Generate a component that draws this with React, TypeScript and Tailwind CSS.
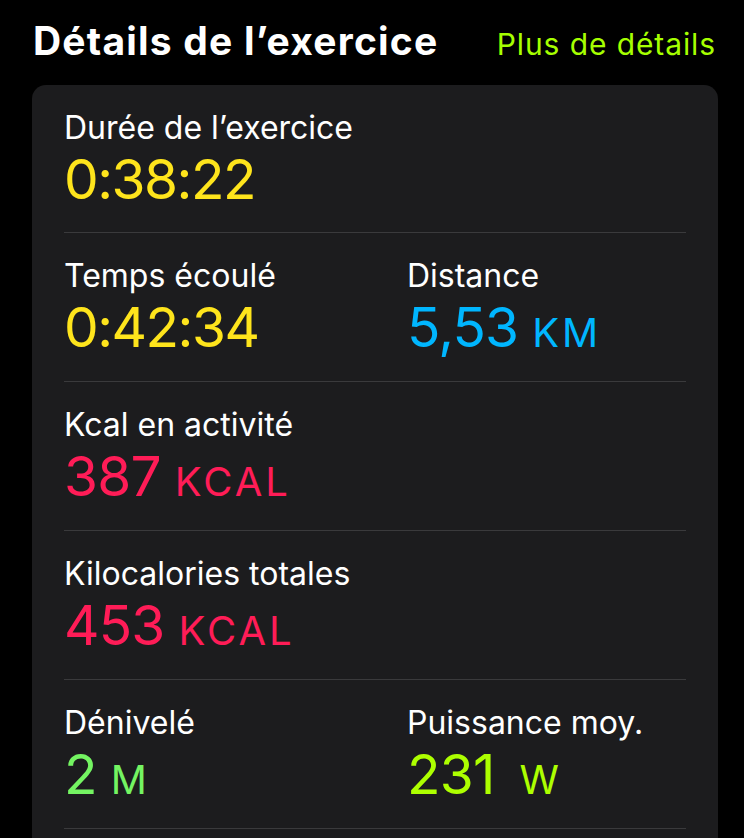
import type { ReactNode } from "react";

type Metric = {
  label: string;
  value: string;
  unit?: string;
  color: string;
};

const rows: Metric[][] = [
  [{ label: "Durée de l’exercice", value: "0:38:22", color: "text-[#fee41c]" }],
  [
    { label: "Temps écoulé", value: "0:42:34", color: "text-[#fee41c]" },
    { label: "Distance", value: "5,53", unit: "KM", color: "text-[#00b6ff]" }
  ],
  [{ label: "Kcal en activité", value: "387", unit: "KCAL", color: "text-[#ff1c57]" }],
  [{ label: "Kilocalories totales", value: "453", unit: "KCAL", color: "text-[#ff1c57]" }],
  [
    { label: "Dénivelé", value: "2", unit: "M", color: "text-[#74f462]" },
    { label: "Puissance moy.", value: "231", unit: "W", color: "text-[#adff00]" }
  ]
];

function MetricCell({ metric }: { metric: Metric }) {
  // times have narrow colons in the original, so they get tighter tracking
  const isTime = metric.value.includes(":");

  return (
    <div>
      <p className="text-[32px] leading-[36px] text-white">{metric.label}</p>
      <p
        className={`mt-[3px] text-[55px] leading-[60px] ${
          isTime ? "tracking-[-1.5px]" : "tracking-[-0.8px]"
        } ${metric.color}`}
      >
        {metric.value}
        {metric.unit && (
          <span className={`${metric.unit === "W" ? "ml-[25px]" : "ml-[14px]"} text-[40px] tracking-[3px]`}>
            {metric.unit}
          </span>
        )}
      </p>
    </div>
  );
}

function Row({ children }: { children: ReactNode }) {
  return (
    <div className="grid h-[149px] grid-cols-[343px_1fr] border-b border-[#3a3a3c] pt-[25px] first:h-[148px]">
      {children}
    </div>
  );
}

export default function App() {
  return (
    <div className="min-h-screen overflow-hidden bg-black font-['Inter',sans-serif]">
      <div className="flex h-[85px] items-baseline justify-between pl-[33px] pr-[28px] pt-[15px]">
        <h1 className="text-[39px] font-bold leading-[52px] tracking-[1.2px] text-white">Détails de l’exercice</h1>
        <a className="text-[30px] leading-[52px] tracking-[0.9px] text-[#a6ff00]">Plus de détails</a>
      </div>

      <section className="ml-[32px] mr-[26px] rounded-[14px] bg-[#1c1c1e] px-[32px] pb-[60px]">
        {rows.map((row, i) => (
          <Row key={i}>
            {row.map((metric) => (
              <MetricCell key={metric.label} metric={metric} />
            ))}
          </Row>
        ))}
      </section>
    </div>
  );
}
